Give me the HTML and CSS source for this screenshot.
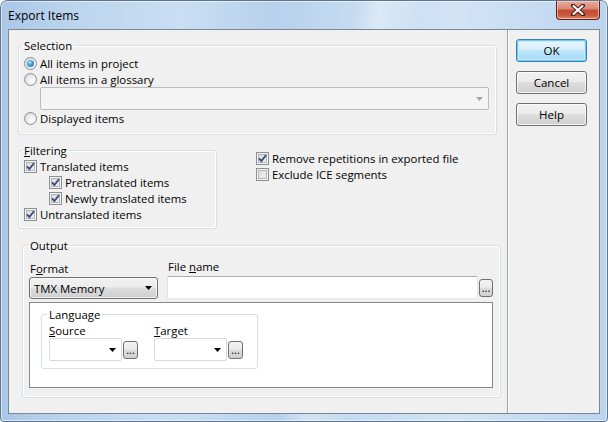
FILE: index.html
```html
<!DOCTYPE html>
<html>
<head>
<meta charset="utf-8">
<title>Export Items</title>
<link rel="stylesheet" href="styles.css">
</head>
<body>
<div class="window">
  <div class="titlebar">
    <span class="title">Export Items</span>
    <span class="close"><svg width="14" height="12" viewBox="0 0 14 12"><path d="M2 1.5 L12 10.5 M12 1.5 L2 10.5" stroke="#43150e" stroke-width="4" stroke-linecap="round"/><path d="M2.5 2 L11.5 10 M11.5 2 L2.5 10" stroke="#ffffff" stroke-width="2.2" stroke-linecap="round"/></svg></span>
  </div>
  <div class="client">
    <div class="main">
      <fieldset class="grp sel">
        <legend>Selection</legend>
        <label class="opt"><span class="rb on"></span>All items in project</label>
        <label class="opt"><span class="rb"></span>All items in a glossary</label>
        <div class="combo dis glossary"><svg class="arrow" width="7" height="4" viewBox="0 0 7 4"><path d="M0 0H7L3.5 4Z" fill="#a3a3a3"/></svg></div>
        <label class="opt last"><span class="rb"></span>Displayed items</label>
      </fieldset>
      <div class="filter-row">
        <fieldset class="grp filt">
          <legend><u>F</u>iltering</legend>
          <label class="opt"><span class="cb"><svg width="9" height="9" viewBox="0 0 9 9"><path d="M1 4.3 L3.4 7 L8 1.2" fill="none" stroke="#3b5086" stroke-width="1.9"/></svg></span>Translated items</label>
          <label class="opt sub"><span class="cb"><svg width="9" height="9" viewBox="0 0 9 9"><path d="M1 4.3 L3.4 7 L8 1.2" fill="none" stroke="#3b5086" stroke-width="1.9"/></svg></span>Pretranslated items</label>
          <label class="opt sub"><span class="cb"><svg width="9" height="9" viewBox="0 0 9 9"><path d="M1 4.3 L3.4 7 L8 1.2" fill="none" stroke="#3b5086" stroke-width="1.9"/></svg></span>Newly translated items</label>
          <label class="opt"><span class="cb"><svg width="9" height="9" viewBox="0 0 9 9"><path d="M1 4.3 L3.4 7 L8 1.2" fill="none" stroke="#3b5086" stroke-width="1.9"/></svg></span>Untranslated items</label>
        </fieldset>
        <div class="extra">
          <label class="opt"><span class="cb"><svg width="9" height="9" viewBox="0 0 9 9"><path d="M1 4.3 L3.4 7 L8 1.2" fill="none" stroke="#3b5086" stroke-width="1.9"/></svg></span>Remove repetitions in exported file</label>
          <label class="opt"><span class="cb"></span>Exclude ICE segments</label>
        </div>
      </div>
      <fieldset class="grp out">
        <legend>Output</legend>
        <div class="out-row">
          <div class="fmt-col">
            <div class="lbl">F<u>o</u>rmat</div>
            <div class="combo btncombo"><span class="val">TMX Memory</span><svg class="arrow" width="7" height="4" viewBox="0 0 7 4"><path d="M0 0H7L3.5 4Z" fill="#000"/></svg></div>
          </div>
          <div class="file-col">
            <div class="lbl">File <u>n</u>ame</div>
            <div class="file-row"><div class="textbox"></div><span class="dots">...</span></div>
          </div>
        </div>
        <div class="whitebox">
          <fieldset class="grp lang">
            <legend>Language</legend>
            <div class="lang-row">
              <div class="lang-col">
                <div class="lbl"><u>S</u>ource</div>
                <div class="pick"><div class="combo wcombo"><svg class="arrow" width="7" height="4" viewBox="0 0 7 4"><path d="M0 0H7L3.5 4Z" fill="#000"/></svg></div><span class="dots small">...</span></div>
              </div>
              <div class="lang-col">
                <div class="lbl"><u>T</u>arget</div>
                <div class="pick"><div class="combo wcombo"><svg class="arrow" width="7" height="4" viewBox="0 0 7 4"><path d="M0 0H7L3.5 4Z" fill="#000"/></svg></div><span class="dots small">...</span></div>
              </div>
            </div>
          </fieldset>
        </div>
      </fieldset>
    </div>
    <div class="side">
      <button class="btn def">OK</button>
      <button class="btn">Cancel</button>
      <button class="btn">Help</button>
    </div>
  </div>
</div>
</body>
</html>
```
FILE: styles.css
```css
* { box-sizing: border-box; }
html, body { margin: 0; padding: 0; }
body {
  width: 608px;
  height: 422px;
  overflow: hidden;
  font-family: "Open Sans", "Noto Sans", sans-serif;
  font-size: 11.4px;
  color: #000;
  background: #ffffff;
}
.window {
  width: 608px;
  height: 422px;
  padding: 0 8px 8px 8px;
  display: flex;
  flex-direction: column;
  border-radius: 7px 7px 4px 4px;
  background:
    linear-gradient(100deg, rgba(255,255,255,0) 0%, rgba(255,255,255,0) 52%, rgba(255,255,255,0.35) 56%, rgba(255,255,255,0) 62%, rgba(255,255,255,0) 100%),
    linear-gradient(to right, #a9c7e6 0%, #bcd5ee 12%, #c9def3 30%, #b7d1ec 45%, #c6dcf2 60%, #d2e4f6 75%, #bcd4ee 100%);
  box-shadow: inset 0 0 0 1px #5d7590, inset 0 0 0 2px rgba(255,255,255,0.55);
}
.titlebar {
  height: 29px;
  display: flex;
  align-items: flex-start;
}
.title {
  padding-top: 8px;
  line-height: 16px;
  font-size: 12px;
  color: #000;
}
.close {
  margin-left: auto;
  width: 44px;
  height: 19px;
  margin-top: 1px;
  border: 1px solid #5b2018;
  border-top: none;
  border-radius: 0 0 4px 4px;
  background: linear-gradient(#e9a99b 0%, #d98674 45%, #c24a33 50%, #c85a41 80%, #e08a6c 100%);
  box-shadow: inset 0 0 0 1px rgba(255,220,210,0.6);
  display: flex;
  align-items: center;
  justify-content: center;
}
.client {
  flex: 1;
  display: flex;
  background: #f0f0f0;
  border: 1px solid #7b8794;
}
.main {
  width: 499px;
  border-right: 1px solid #a0a0a0;
  display: flex;
  flex-direction: column;
}
.side {
  flex: 1;
  border-left: 1px solid #ffffff;
  padding: 9px 0 0 7px;
  display: flex;
  flex-direction: column;
  gap: 9px;
}

/* group boxes */
.grp {
  margin: 0;
  border: 1px solid #d5dfe5;
  border-radius: 3px;
  box-shadow: inset 0 0 0 1px #ffffff;
  min-width: 0;
}
.grp legend {
  padding: 0 2px;
  line-height: 15px;
  margin-left: -2px;
}
.sel {
  margin: 8px 0 0 9px;
  width: 479px;
  padding: 2px 0 8px 5px;
}
.opt {
  display: flex;
  align-items: center;
  height: 16px;
  gap: 3px;
  white-space: nowrap;
}
.opt.sub { padding-left: 25px; }
.glossary {
  margin: 0 0 0 16px;
  width: 449px;
  height: 23px;
}
.filter-row {
  display: flex;
  margin-top: 8px;
}
.filt {
  margin: 0 0 0 9px;
  width: 199px;
  padding: 0 0 6px 5px;
}
.extra {
  margin: 7px 0 0 39px;
}
.out {
  margin: 9px 0 0 13px;
  width: 479px;
  padding: 6px 7px 9px 6px;
}
.out legend { margin-left: -1px; }
.out-row {
  display: flex;
  gap: 9px;
}
.lbl {
  line-height: 15px;
  height: 15px;
  padding-left: 1px;
}
.fmt-col { width: 129px; }
.fmt-col .lbl { margin-top: 2px; }
.fmt-col .combo { margin-top: 1px; }
.file-col { flex: 1; }
.file-row {
  display: flex;
  align-items: center;
  gap: 1px;
  margin-top: 2px;
}
.textbox {
  width: 311px;
  height: 23px;
  background: #ffffff;
  border: 1px solid;
  border-color: #abadb3 #e2e3ea #e3e9ef #dbdfe6;
  border-radius: 2px;
}
.dots {
  width: 14px;
  height: 18px;
  border: 1px solid #707070;
  border-radius: 3px;
  background: linear-gradient(#f2f2f2 0%, #ebebeb 45%, #dddddd 50%, #cfcfcf 100%);
  font-size: 11px;
  line-height: 11px;
  display: flex;
  align-items: flex-end;
  justify-content: center;
  padding-bottom: 3px;
}
.dots.small { width: 15px; height: 18px; }
.whitebox {
  margin-top: 3px;
  height: 86px;
  background: #ffffff;
  border: 1px solid #868686;
  padding: 4px 0 0 11px;
}
.lang {
  width: 217px;
  padding: 1px 0 7px 7px;
}
.lang legend { margin-left: -2px; }
.lang-row {
  display: flex;
  gap: 16px;
}
.lang-col .lbl { padding-left: 0; }
.pick {
  display: flex;
  align-items: center;
  gap: 1px;
}

/* combos */
.combo {
  display: flex;
  align-items: center;
  border: 1px solid #c9c9c9;
  border-radius: 2px;
}
.combo .arrow { margin-left: auto; }
.combo.dis {
  background: #f4f4f4;
  border-color: #bcbcbc;
}
.combo.dis .arrow { margin-right: 5px; }
.btncombo {
  height: 22px;
  border-color: #707070;
  border-radius: 3px;
  background: linear-gradient(#f2f2f2 0%, #ebebeb 45%, #dddddd 50%, #cfcfcf 100%);
  box-shadow: inset 0 0 0 1px rgba(255,255,255,0.7);
  padding: 0 5px 0 4px;
}
.wcombo {
  width: 73px;
  height: 23px;
  background: #ffffff;
  border-color: #d9d9d9;
  padding-right: 5px;
}

/* radio / checkbox */
.rb {
  width: 13px;
  height: 13px;
  border-radius: 50%;
  border: 1px solid #8d8d8d;
  background: radial-gradient(circle at 65% 65%, #ffffff 0%, #ececec 45%, #d0d0d0 100%);
  display: inline-flex;
  align-items: center;
  justify-content: center;
  flex: none;
}
.rb.on::after {
  content: "";
  width: 7px;
  height: 7px;
  border-radius: 50%;
  background: radial-gradient(circle at 40% 35%, #b7e6fb 0%, #3c9be0 45%, #1b5aa4 100%);
}
.cb {
  width: 13px;
  height: 13px;
  border: 1px solid #8e8f8f;
  background: linear-gradient(135deg, #d6d6d6 0%, #f6f6f6 100%);
  box-shadow: inset 0 0 0 1px #f4f4f4, inset 0 0 0 2px #b4b4b4;
  display: inline-flex;
  align-items: center;
  justify-content: center;
  flex: none;
}
.cb svg { display: block; }

/* buttons */
.btn {
  width: 71px;
  height: 23px;
  margin: 0;
  padding: 0;
  font-family: inherit;
  font-size: 11.5px;
  color: #000;
  border: 1px solid #707070;
  border-radius: 3px;
  background: linear-gradient(#f2f2f2 0%, #ebebeb 45%, #dddddd 50%, #cfcfcf 100%);
  box-shadow: inset 0 0 0 1px rgba(255,255,255,0.75);
}
.btn.def {
  border-color: #3c7fb1;
  background: linear-gradient(#eaf6fd 0%, #d9f0fc 45%, #bee6fd 50%, #a7d9f5 100%);
  box-shadow: inset 0 0 0 1px #6fcaf4, inset 0 0 0 2px #c6ecfc;
}
```
